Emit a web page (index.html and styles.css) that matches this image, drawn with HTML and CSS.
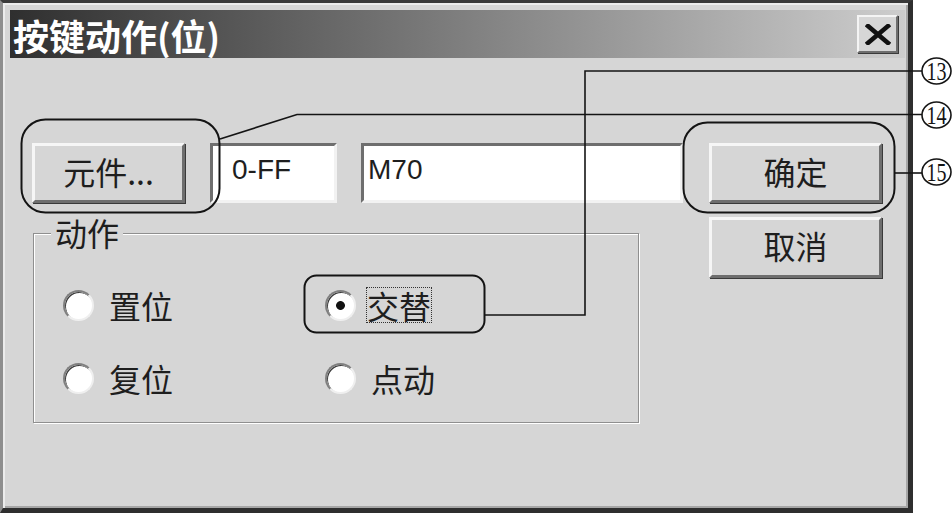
FILE: index.html
```html
<!DOCTYPE html>
<html lang="zh">
<head>
<meta charset="utf-8">
<title>按键动作(位)</title>
<link rel="stylesheet" href="styles.css">
</head>
<body>
<div class="window">
  <div class="titlebar">
    <span class="title">按键动作(位)</span>
    <div class="close">
      <svg width="26" height="21" viewBox="0 0 26 21"><path d="M3 2 L23 19 M23 2 L3 19" stroke="#111" stroke-width="4.5" stroke-linecap="square"/></svg>
    </div>
  </div>
  <div class="content">
    <div class="left">
      <div class="row">
        <div class="btn btn-elem">元件...</div>
        <div class="field field-range">0-FF</div>
        <div class="field field-name">M70</div>
      </div>
      <div class="group">
        <div class="legend">动作</div>
        <div class="radios">
          <div class="opt"><span class="radio"></span><span>置位</span></div>
          <div class="opt"><span class="radio checked"></span><span class="focus">交替</span></div>
          <div class="opt"><span class="radio"></span><span>复位</span></div>
          <div class="opt"><span class="radio"></span><span>点动</span></div>
        </div>
      </div>
    </div>
    <div class="right">
      <div class="btn btn-ok">确定</div>
      <div class="btn btn-cancel">取消</div>
    </div>
  </div>
</div>
<svg class="notes" width="952" height="513" viewBox="0 0 952 513">
  <g fill="none" stroke="#141414" stroke-width="2">
    <rect x="21.5" y="119.5" width="198" height="93" rx="24"/>
    <rect x="683.5" y="122.5" width="211" height="90" rx="24"/>
    <rect x="304.5" y="275.5" width="180" height="57" rx="12"/>
  </g>
  <g fill="none" stroke="#141414" stroke-width="1.6">
    <polyline points="485,315 585,315 585,71 922,71"/>
    <polyline points="220,139 297,114.5 922,114.5"/>
    <line x1="895" y1="173" x2="922" y2="173"/>
    <ellipse cx="936.5" cy="71" rx="14.5" ry="13"/>
    <ellipse cx="936.5" cy="115" rx="14.5" ry="13"/>
    <ellipse cx="936.5" cy="172" rx="14.5" ry="13"/>
  </g>
  <g class="num">
    <text x="936.5" y="80" text-anchor="middle" textLength="20" lengthAdjust="spacingAndGlyphs">13</text>
    <text x="936.5" y="124" text-anchor="middle" textLength="20" lengthAdjust="spacingAndGlyphs">14</text>
    <text x="936.5" y="181" text-anchor="middle" textLength="20" lengthAdjust="spacingAndGlyphs">15</text>
  </g>
</svg>
</body>
</html>
```
FILE: styles.css
```css
html, body {
  margin: 0;
}
body {
  width: 952px;
  height: 513px;
  background: #fff;
  position: relative;
  overflow: hidden;
  font-family: "Noto Sans CJK SC", "Liberation Sans", sans-serif;
  color: #1e1e1e;
}
.window {
  box-sizing: border-box;
  width: 913px;
  height: 513px;
  background: #d6d6d6;
  border-style: solid;
  border-width: 3px 5px 5px 3px;
  border-color: #3a3a3a #2e2e2e #2e2e2e #8e8e8e;
  box-shadow: inset 2px 2px 0 #ececec, inset -2px -2px 0 #a6a6a6;
  padding: 7px 3px 0 7px;
}
.titlebar {
  display: flex;
  align-items: center;
  justify-content: space-between;
  height: 48px;
  background: linear-gradient(to right, #2f2f2f, #cdcdcd);
}
.title {
  color: #fff;
  font-weight: 700;
  font-size: 36px;
  line-height: 40px;
  margin-left: 3px;
  padding-top: 2px;
}
.close {
  box-sizing: border-box;
  width: 41px;
  height: 38px;
  margin-right: 7px;
  background: #d6d6d6;
  border: 2px solid;
  border-color: #f4f4f4 #6e6e6e #6e6e6e #f4f4f4;
  box-shadow: 1px 1px 0 #3a3a3a;
  display: flex;
  align-items: center;
  justify-content: center;
}
.content {
  display: flex;
  margin-top: 85px;
  margin-left: 22px;
}
.left {
  width: 651px;
}
.row {
  display: flex;
  height: 60px;
}
.btn {
  box-sizing: border-box;
  border: 3px solid;
  border-color: #f6f6f6 #6e6e6e #6e6e6e #f6f6f6;
  box-shadow: 1px 1px 0 #3a3a3a;
  background: #d6d6d6;
  display: flex;
  align-items: center;
  justify-content: center;
  font-size: 32px;
  line-height: 1;
  padding-bottom: 5px;
}
.btn-elem {
  width: 153px;
}
.field {
  box-sizing: border-box;
  background: #fff;
  border: 3px solid;
  border-color: #6e6e6e #f2f2f2 #f2f2f2 #6e6e6e;
  display: flex;
  align-items: center;
  font-family: "Liberation Sans", sans-serif;
  font-size: 28px;
  padding-bottom: 6px;
}
.field-range {
  width: 127px;
  margin-left: 25px;
  padding-left: 19px;
}
.field-name {
  width: 322px;
  margin-left: 24px;
  padding-left: 4px;
}
.group {
  box-sizing: border-box;
  width: 606px;
  height: 190px;
  margin-top: 30px;
  margin-left: 1px;
  border: 1px solid #8f8f8f;
  box-shadow: inset 1px 1px 0 #fff, 1px 1px 0 #fff;
}
.legend {
  width: fit-content;
  margin-top: -19px;
  margin-left: 17px;
  padding: 0 4px;
  background: #d6d6d6;
  font-size: 32px;
  line-height: 34px;
}
.radios {
  display: grid;
  grid-template-columns: 262px auto;
  grid-auto-rows: 34px;
  row-gap: 39px;
  margin-top: 39px;
  margin-left: 29px;
}
.opt {
  display: flex;
  align-items: center;
  gap: 15px;
  font-size: 32px;
  line-height: 34px;
}
.radio {
  flex: none;
  box-sizing: border-box;
  width: 31px;
  height: 31px;
  border-radius: 50%;
  background: #fff;
  border: 2px solid;
  border-color: #808080 #efefef #efefef #808080;
  box-shadow: inset 1px 1px 0 #3c3c3c;
}
.radio.checked {
  background: radial-gradient(circle, #111 0 4px, #fff 4.8px);
}
.focus {
  outline: 1px dotted #333;
  outline-offset: 0;
  margin-left: -4px;
}
.right {
  margin-left: 26px;
  width: 173px;
  display: flex;
  flex-direction: column;
  gap: 14px;
}
.btn-ok {
  height: 60px;
}
.btn-cancel {
  height: 61px;
}
.notes {
  position: absolute;
  left: 0;
  top: 0;
  pointer-events: none;
}
.num {
  font-family: "Liberation Serif", serif;
  font-size: 26px;
  fill: #141414;
}
```
